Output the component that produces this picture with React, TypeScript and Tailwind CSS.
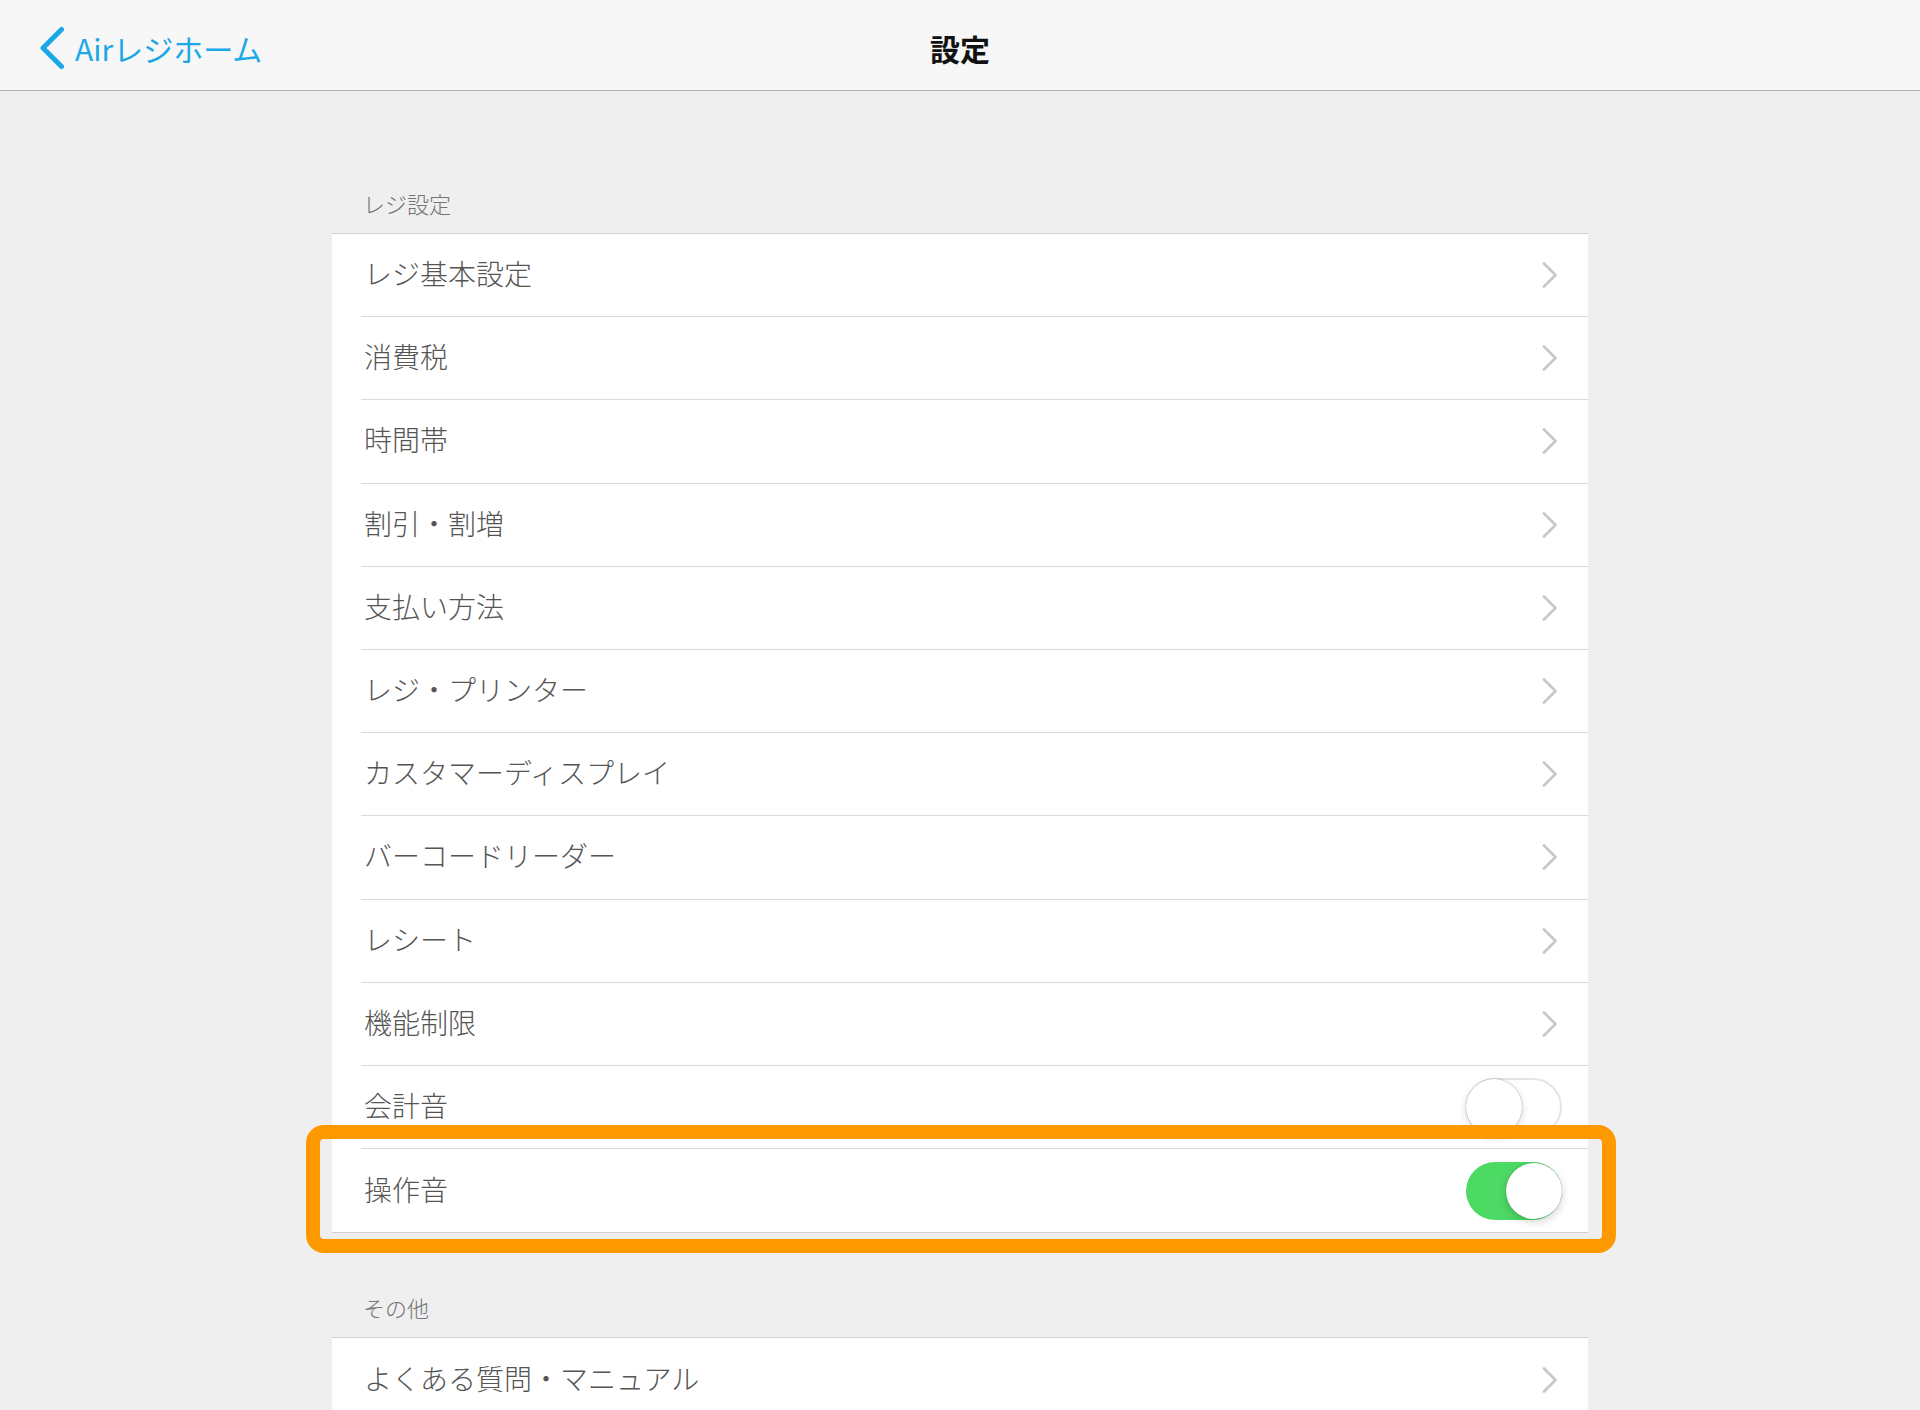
import React from "react";

type Row = { label: string; kind: "link" | "off" | "on"; highlight?: boolean };

const section1: Row[] = [
  { label: "レジ基本設定", kind: "link" },
  { label: "消費税", kind: "link" },
  { label: "時間帯", kind: "link" },
  { label: "割引・割増", kind: "link" },
  { label: "支払い方法", kind: "link" },
  { label: "レジ・プリンター", kind: "link" },
  { label: "カスタマーディスプレイ", kind: "link" },
  { label: "バーコードリーダー", kind: "link" },
  { label: "レシート", kind: "link" },
  { label: "機能制限", kind: "link" },
  { label: "会計音", kind: "off" },
  { label: "操作音", kind: "on", highlight: true },
];

const section2: Row[] = [{ label: "よくある質問・マニュアル", kind: "link" }];

function Chevron() {
  return (
    <svg width="16" height="26" viewBox="0 0 16 26" className="block">
      <polyline
        points="2,1.5 13.5,13 2,24.5"
        fill="none"
        stroke="#c7c7cc"
        strokeWidth="2.6"
        strokeLinecap="round"
        strokeLinejoin="round"
      />
    </svg>
  );
}

function Toggle({ on }: { on: boolean }) {
  return (
    <div
      className={
        on
          ? "relative w-[96px] h-[58px] rounded-full bg-[#4cd964]"
          : "relative w-[96px] h-[58px] rounded-full bg-white border-[2px] border-[#e5e5e5]"
      }
    >
      <div
        className={
          on
            ? "absolute top-[1px] right-0 w-[56px] h-[56px] rounded-full bg-white shadow-[0_3px_8px_rgba(0,0,0,0.18),0_0_1px_rgba(0,0,0,0.35)]"
            : "absolute top-[-1px] left-[-2px] w-[56px] h-[56px] rounded-full bg-white shadow-[0_3px_8px_rgba(0,0,0,0.15),0_0_1.5px_rgba(0,0,0,0.4)]"
        }
      />
    </div>
  );
}

function SettingRow({ row, last }: { row: Row; last: boolean }) {
  return (
    <div className="relative h-[83.2px] pl-[29px] flex">
      <div
        className={
          last
            ? "flex-1 flex items-center justify-between"
            : "flex-1 flex items-center justify-between border-b border-[#d9d9d9]"
        }
      >
        <span className="ml-[3px] pb-[4px] text-[28px] leading-none font-light text-[#555555]">{row.label}</span>
        {row.kind === "link" ? (
          <div className="pr-[30px]">
            <Chevron />
          </div>
        ) : (
          <div className="pr-[26px]">
            <Toggle on={row.kind === "on"} />
          </div>
        )}
      </div>
      {row.highlight && (
        <div className="pointer-events-none absolute top-[-24px] left-[-26px] w-[1310px] h-[128px] rounded-[18px] border-[14px] border-[#ff9900]" />
      )}
    </div>
  );
}

function Section({ title, rows }: { title: string; rows: Row[] }) {
  return (
    <section>
      <div className="pt-[63px] pb-[19px] pl-[31px] text-[22px] leading-none font-light text-[#737373]">{title}</div>
      <div className="bg-white border-y border-[#d0d0d0]">
        {rows.map((r, i) => (
          <SettingRow key={r.label} row={r} last={i === rows.length - 1} />
        ))}
      </div>
    </section>
  );
}

export default function App() {
  return (
    <div className="w-[1920px] h-[1410px] overflow-hidden bg-[#efefef] font-['Noto_Sans_CJK_JP','Noto_Sans',sans-serif]">
      <header className="relative h-[91px] bg-[#f7f7f7] border-b border-[#b2b2b2] flex items-center justify-center">
        <div className="absolute left-[38px] top-0 h-[90px] flex items-center gap-[9px] pt-[8px] text-[#1ba8e6]">
          <svg width="28" height="46" viewBox="0 0 28 46" className="block">
            <polyline
              points="23.5,3.5 5,22 23.5,40.5"
              fill="none"
              stroke="#1ba8e6"
              strokeWidth="5"
              strokeLinecap="round"
              strokeLinejoin="round"
            />
          </svg>
          <span className="text-[30px] leading-none pb-[2px]">Airレジホーム</span>
        </div>
        <h1 className="text-[30px] leading-none font-bold text-[#111] pt-[6px]">設定</h1>
      </header>
      <main className="w-[1256px] mx-auto pt-[38px]">
        <Section title="レジ設定" rows={section1} />
        <Section title="その他" rows={section2} />
      </main>
    </div>
  );
}
